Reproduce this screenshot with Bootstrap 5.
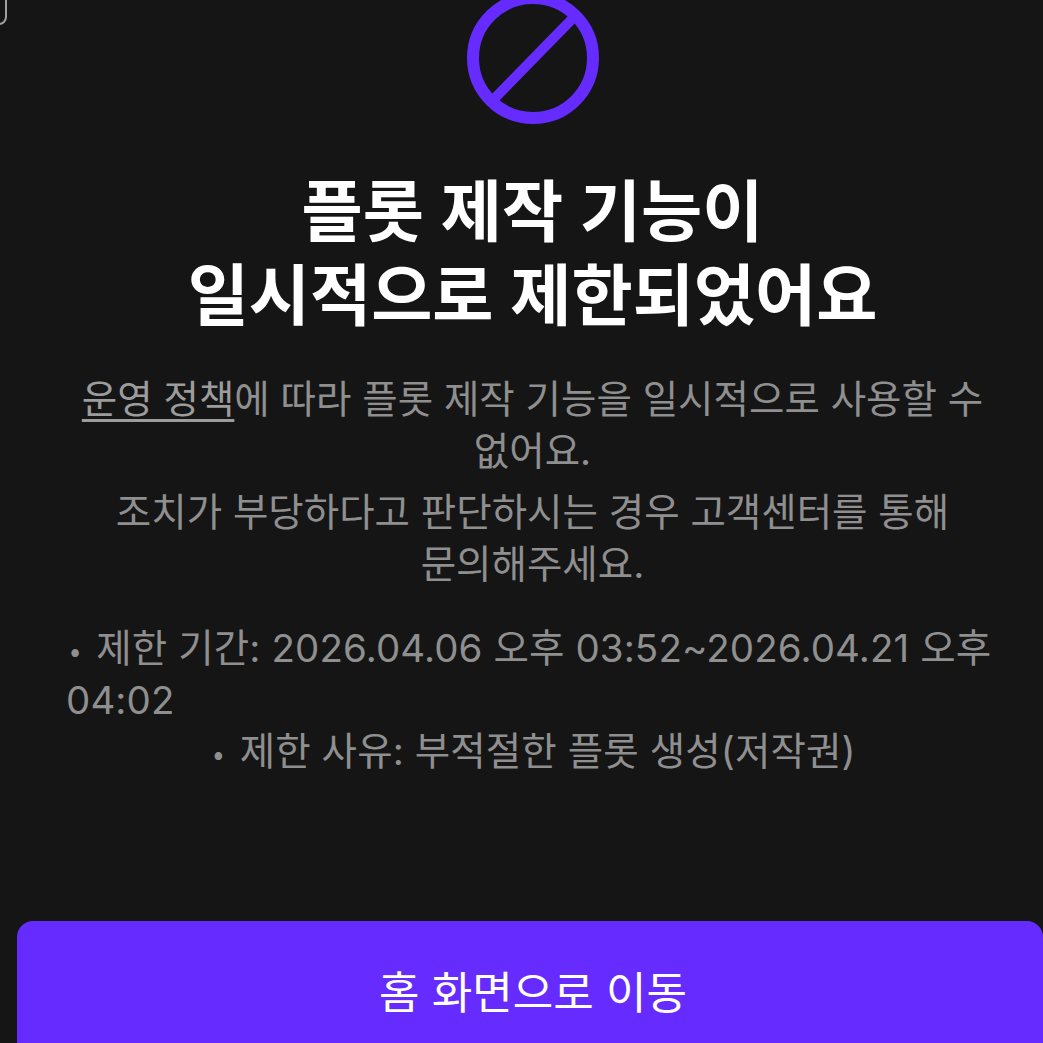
<!DOCTYPE html>
<html lang="ko">
<head>
  <meta charset="UTF-8">
  <meta name="viewport" content="width=device-width, initial-scale=1.0">
  <title>플롯 제작 제한</title>
  <link href="https://cdn.jsdelivr.net/npm/bootstrap@5.3.0/dist/css/bootstrap.min.css" rel="stylesheet">
  <style>
    html, body {
      height: 1043px;
      overflow: hidden;
    }
    body {
      background-color: #151515;
      font-family: "Inter", "Noto Sans CJK KR", sans-serif;
      position: relative;
    }
    .back-corner {
      position: absolute;
      left: -20px;
      top: -20px;
      width: 27px;
      height: 45px;
      border: 2px solid #a0a0a0;
      border-radius: 8px;
    }
    .page-wrap {
      height: 1043px;
    }
    .ban-icon {
      display: block;
      width: 134px;
      height: 134px;
      margin: -8px 0 0 466px;
    }
    .notice-title {
      font-size: 66.5px;
      font-weight: 600;
      line-height: 84px;
      color: #fff;
      margin: 44px 0 0;
      padding-left: 22px;
    }
    .notice-body {
      padding: 0 44px 0 66px;
      margin-top: 35px;
      color: #8f8f8f;
      font-size: 38.5px;
      line-height: 52px;
    }
    .notice-body p {
      margin: 0 0 9px;
    }
    .notice-body a {
      color: #9c9c9c;
      text-decoration-thickness: 3px;
      text-underline-offset: 6px;
    }
    .limit-list {
      list-style: none;
      margin: 33px 0 0;
      padding: 0;
      line-height: 51px;
      letter-spacing: .1px;
    }
    .limit-list li::before {
      content: "•";
      font-family: "Noto Sans CJK KR", sans-serif;
      font-size: 30px;
      margin: 0 16px 0 4px;
    }
    .go-home {
      margin: 0 0 -20px 17px;
      width: 1026px;
      height: 142px;
      padding: 2px 0 0 6px;
      background-color: #662cff;
      color: #fff;
      font-size: 44px;
      border: 0;
      border-radius: 16px;
    }
  </style>
</head>
<body>
  <div class="back-corner"></div>
  <div class="page-wrap d-flex flex-column">
    <svg class="ban-icon" viewBox="0 0 134 134" fill="none" stroke="#662cff">
      <circle cx="67" cy="66" r="60" stroke-width="12"/>
      <path d="M27 108L109 24" stroke-width="10"/>
    </svg>
    <h1 class="notice-title text-center">플롯 제작 기능이<br>일시적으로 제한되었어요</h1>
    <div class="notice-body text-center">
      <p><a href="#">운영 정책</a>에 따라 플롯 제작 기능을 일시적으로 사용할 수 없어요.</p>
      <p>조치가 부당하다고 판단하시는 경우 고객센터를 통해<br>문의해주세요.</p>
      <ul class="limit-list d-flex flex-column align-items-center">
        <li class="text-start">제한 기간: 2026.04.06 오후 03:52~2026.04.21 오후 04:02</li>
        <li class="text-start">제한 사유: 부적절한 플롯 생성(저작권)</li>
      </ul>
    </div>
    <button type="button" class="btn go-home mt-auto">홈 화면으로 이동</button>
  </div>
  <script src="https://cdn.jsdelivr.net/npm/bootstrap@5.3.0/dist/js/bootstrap.bundle.min.js"></script>
</body>
</html>
